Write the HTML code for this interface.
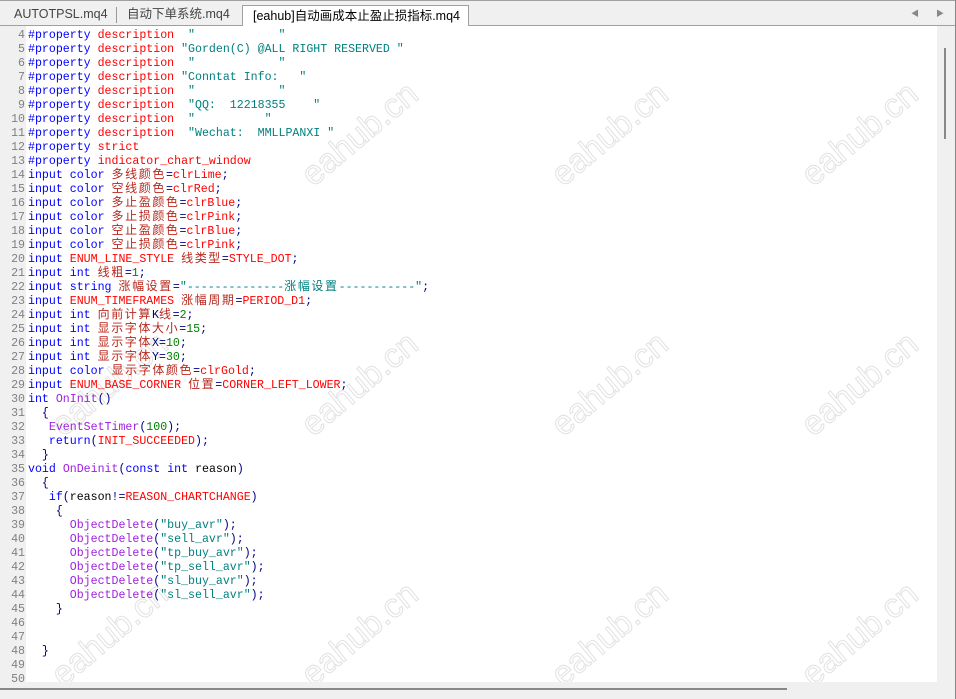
<!DOCTYPE html>
<html><head><meta charset="utf-8"><style>
*{margin:0;padding:0;box-sizing:border-box}
body{width:956px;height:699px;overflow:hidden;background:#f0f0f0;position:relative;font-family:"Liberation Sans","Noto Sans CJK SC",sans-serif}
.tabs{position:absolute;left:0;top:0;width:956px;height:26px;background:#f0f0f0;border-top:1px solid #a0a0a0;border-bottom:1px solid #a0a0a0}
.tab{position:absolute;top:6px;font-size:12.5px;line-height:15px;color:#444;white-space:nowrap}
.act{position:absolute;left:242px;top:4px;width:227px;height:22px;background:#fff;border:1px solid #a0a0a0;border-bottom:none;font-size:12.5px;line-height:15px;color:#000;padding:3px 0 0 10px;white-space:nowrap;overflow:hidden}
.sep{position:absolute;left:116px;top:6px;width:1px;height:16px;background:#999}
.arr{position:absolute;top:7px;font-size:8px;color:#888}
.gut{position:absolute;left:0;top:26px;width:26px;height:656px;background:#f0f0f0}
.ed{position:absolute;left:26px;top:26px;width:911px;height:656px;background:#fff;overflow:hidden}
.vs{position:absolute;left:937px;top:26px;width:18px;height:656px;background:#f0f0f0}
.vth{position:absolute;left:944px;top:48px;width:2px;height:91px;background:#888}
.hth{position:absolute;left:0;top:688px;width:787px;height:2px;background:#888}
.rb{position:absolute;left:955px;top:0;width:1px;height:699px;background:#888}
.code{position:absolute;left:0;top:29px;width:937px;font-family:"Liberation Mono",monospace;font-size:11.6px;color:#000080}
.code div{height:14px;line-height:14px;white-space:pre;overflow:visible}
.ln{display:inline-block;width:25px;text-align:right;color:#808080;margin-right:3px}
.k{color:#0000ff}.r{color:#ff0000}.s{color:#008080}.p{color:#a020e0}.g{color:#008000}.d{color:#000}
.c{display:inline-block;height:14px;line-height:14px;vertical-align:top;position:relative;top:-2px;font-family:"Noto Sans CJK SC",sans-serif;font-size:12px;letter-spacing:1.6px;color:#b8281e}
.wm{position:absolute;font-family:"Liberation Sans",sans-serif;font-size:34px;color:transparent;-webkit-text-stroke:1px #e2e2e2;transform:rotate(-40deg);white-space:nowrap}
</style></head><body>
<div class="tabs">
<div class="tab" style="left:14px">AUTOTPSL.mq4</div>
<div class="sep"></div>
<div class="tab" style="left:127px">自动下单系统.mq4</div>
<div class="act">[eahub]自动画成本止盈止损指标.mq4</div>
<div class="arr" style="left:911px">◀</div><div class="arr" style="left:936px">▶</div>
</div>
<div class="gut"></div><div class="ed"></div><div class="vs"></div>
<div class="wm" style="left:290px;top:115px">eahub.cn</div>
<div class="wm" style="left:540px;top:115px">eahub.cn</div>
<div class="wm" style="left:790px;top:115px">eahub.cn</div>
<div class="wm" style="left:40px;top:365px">eahub.cn</div>
<div class="wm" style="left:290px;top:365px">eahub.cn</div>
<div class="wm" style="left:540px;top:365px">eahub.cn</div>
<div class="wm" style="left:790px;top:365px">eahub.cn</div>
<div class="wm" style="left:40px;top:615px">eahub.cn</div>
<div class="wm" style="left:290px;top:615px">eahub.cn</div>
<div class="wm" style="left:540px;top:615px">eahub.cn</div>
<div class="wm" style="left:790px;top:615px">eahub.cn</div>
<div class="code">
<div><span class="ln">4</span><span class="k">#property</span> <span class="r">description</span>  <span class="s">"            "</span></div>
<div><span class="ln">5</span><span class="k">#property</span> <span class="r">description</span> <span class="s">"Gorden(C) @ALL RIGHT RESERVED "</span></div>
<div><span class="ln">6</span><span class="k">#property</span> <span class="r">description</span>  <span class="s">"            "</span></div>
<div><span class="ln">7</span><span class="k">#property</span> <span class="r">description</span> <span class="s">"Conntat Info:   "</span></div>
<div><span class="ln">8</span><span class="k">#property</span> <span class="r">description</span>  <span class="s">"            "</span></div>
<div><span class="ln">9</span><span class="k">#property</span> <span class="r">description</span>  <span class="s">"QQ:  12218355    "</span></div>
<div><span class="ln">10</span><span class="k">#property</span> <span class="r">description</span>  <span class="s">"          "</span></div>
<div><span class="ln">11</span><span class="k">#property</span> <span class="r">description</span>  <span class="s">"Wechat:  MMLLPANXI "</span></div>
<div><span class="ln">12</span><span class="k">#property</span> <span class="r">strict</span></div>
<div><span class="ln">13</span><span class="k">#property</span> <span class="r">indicator_chart_window</span></div>
<div><span class="ln">14</span><span class="k">input</span> <span class="k">color</span> <span class="c">多线颜色</span>=<span class="r">clrLime</span>;</div>
<div><span class="ln">15</span><span class="k">input</span> <span class="k">color</span> <span class="c">空线颜色</span>=<span class="r">clrRed</span>;</div>
<div><span class="ln">16</span><span class="k">input</span> <span class="k">color</span> <span class="c">多止盈颜色</span>=<span class="r">clrBlue</span>;</div>
<div><span class="ln">17</span><span class="k">input</span> <span class="k">color</span> <span class="c">多止损颜色</span>=<span class="r">clrPink</span>;</div>
<div><span class="ln">18</span><span class="k">input</span> <span class="k">color</span> <span class="c">空止盈颜色</span>=<span class="r">clrBlue</span>;</div>
<div><span class="ln">19</span><span class="k">input</span> <span class="k">color</span> <span class="c">空止损颜色</span>=<span class="r">clrPink</span>;</div>
<div><span class="ln">20</span><span class="k">input</span> <span class="r">ENUM_LINE_STYLE</span> <span class="c">线类型</span>=<span class="r">STYLE_DOT</span>;</div>
<div><span class="ln">21</span><span class="k">input</span> <span class="k">int</span> <span class="c">线粗</span>=<span class="g">1</span>;</div>
<div><span class="ln">22</span><span class="k">input</span> <span class="k">string</span> <span class="c">涨幅设置</span>=<span class="s">"--------------<span class="c" style="color:#008080">涨幅设置</span>-----------"</span>;</div>
<div><span class="ln">23</span><span class="k">input</span> <span class="r">ENUM_TIMEFRAMES</span> <span class="c">涨幅周期</span>=<span class="r">PERIOD_D1</span>;</div>
<div><span class="ln">24</span><span class="k">input</span> <span class="k">int</span> <span class="c">向前计算</span>K<span class="c">线</span>=<span class="g">2</span>;</div>
<div><span class="ln">25</span><span class="k">input</span> <span class="k">int</span> <span class="c">显示字体大小</span>=<span class="g">15</span>;</div>
<div><span class="ln">26</span><span class="k">input</span> <span class="k">int</span> <span class="c">显示字体</span>X=<span class="g">10</span>;</div>
<div><span class="ln">27</span><span class="k">input</span> <span class="k">int</span> <span class="c">显示字体</span>Y=<span class="g">30</span>;</div>
<div><span class="ln">28</span><span class="k">input</span> <span class="k">color</span> <span class="c">显示字体颜色</span>=<span class="r">clrGold</span>;</div>
<div><span class="ln">29</span><span class="k">input</span> <span class="r">ENUM_BASE_CORNER</span> <span class="c">位置</span>=<span class="r">CORNER_LEFT_LOWER</span>;</div>
<div><span class="ln">30</span><span class="k">int</span> <span class="p">OnInit</span>()</div>
<div><span class="ln">31</span>  {</div>
<div><span class="ln">32</span>   <span class="p">EventSetTimer</span>(<span class="g">100</span>);</div>
<div><span class="ln">33</span>   <span class="k">return</span>(<span class="r">INIT_SUCCEEDED</span>);</div>
<div><span class="ln">34</span>  }</div>
<div><span class="ln">35</span><span class="k">void</span> <span class="p">OnDeinit</span>(<span class="k">const</span> <span class="k">int</span> <span class="d">reason</span>)</div>
<div><span class="ln">36</span>  {</div>
<div><span class="ln">37</span>   <span class="k">if</span>(<span class="d">reason</span>!=<span class="r">REASON_CHARTCHANGE</span>)</div>
<div><span class="ln">38</span>    {</div>
<div><span class="ln">39</span>      <span class="p">ObjectDelete</span>(<span class="s">"buy_avr"</span>);</div>
<div><span class="ln">40</span>      <span class="p">ObjectDelete</span>(<span class="s">"sell_avr"</span>);</div>
<div><span class="ln">41</span>      <span class="p">ObjectDelete</span>(<span class="s">"tp_buy_avr"</span>);</div>
<div><span class="ln">42</span>      <span class="p">ObjectDelete</span>(<span class="s">"tp_sell_avr"</span>);</div>
<div><span class="ln">43</span>      <span class="p">ObjectDelete</span>(<span class="s">"sl_buy_avr"</span>);</div>
<div><span class="ln">44</span>      <span class="p">ObjectDelete</span>(<span class="s">"sl_sell_avr"</span>);</div>
<div><span class="ln">45</span>    }</div>
<div><span class="ln">46</span></div>
<div><span class="ln">47</span></div>
<div><span class="ln">48</span>  }</div>
<div><span class="ln">49</span></div>
<div><span class="ln">50</span></div>
</div>
<div class="gut" style="top:682px;height:17px;width:937px;background:#f0f0f0"></div>
<div class="vth"></div><div class="hth"></div><div class="rb"></div>
</body></html>
